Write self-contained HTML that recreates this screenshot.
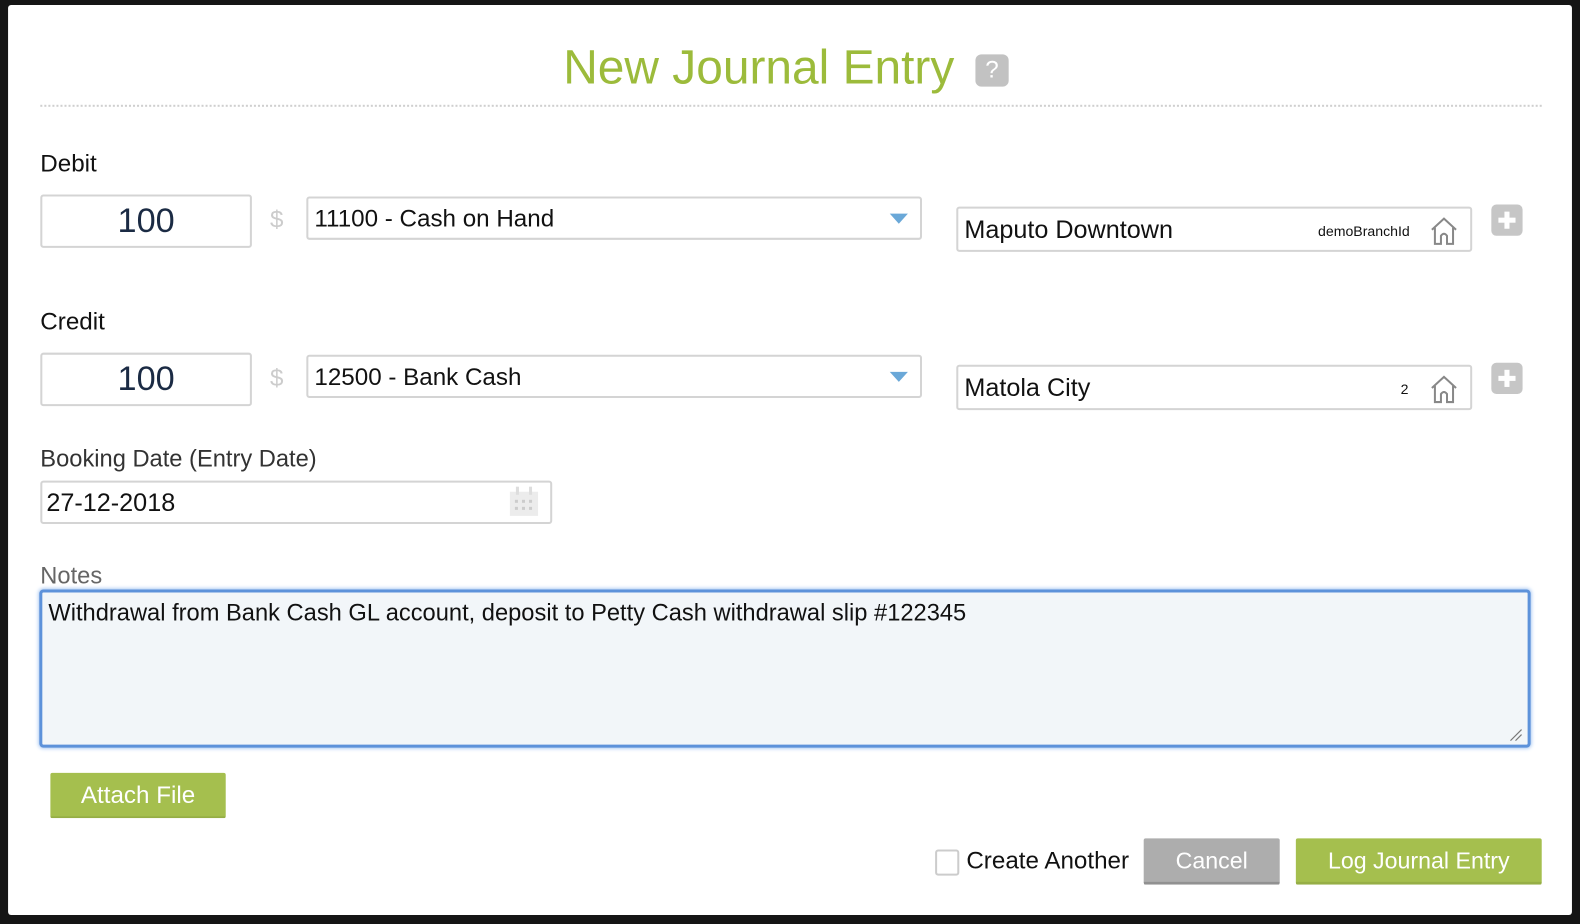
<!DOCTYPE html>
<html><head><meta charset="utf-8"><style>
*{box-sizing:border-box;margin:0;padding:0}
body{width:1580px;height:924px;background:#151515;font-family:"Liberation Sans",sans-serif;position:relative;overflow:hidden}
#z{position:absolute;left:0;top:0;width:1568px;height:917px;transform:scale(1.00766);transform-origin:0 0}
.w{position:absolute;left:8px;top:5px;width:1552px;height:903px;background:#fff;border-radius:3px}
.a{position:absolute}
.box{position:absolute;border:2px solid #d4d4d4;border-radius:3px;background:#fff}
.lbl{position:absolute;font-size:24px;color:#111;line-height:1;white-space:nowrap}
.t{position:absolute;font-size:24px;color:#111;line-height:1;white-space:nowrap}
.amt{font-size:34px;color:#1b2b44;text-align:center;line-height:48px}
.arrow{position:absolute;width:0;height:0;border-left:9px solid transparent;border-right:9px solid transparent;border-top:10px solid #6aa8d8}
.plus{position:absolute;width:31px;height:31px;background:#c6c6c6;border-radius:5px}
.plus:before{content:"";position:absolute;left:7px;top:13px;width:17px;height:5px;background:#fff}
.plus:after{content:"";position:absolute;left:13px;top:7px;width:5px;height:17px;background:#fff}
.btn{position:absolute;color:#fff;font-size:23px;text-align:center;border-radius:2px;white-space:nowrap}
</style></head><body><div id="z">
<div class="w"></div>
<div class="t" style="left:0;width:1506px;text-align:center;top:44px;font-size:47.5px;color:#9cbb3b">New Journal Entry</div>
<div class="a" style="left:968px;top:54px;width:33px;height:32px;background:#c2c2c2;border-radius:6px;color:#fff;font-size:24px;text-align:center;line-height:32px">?</div>
<div class="a" style="left:40px;top:104px;width:1490px;border-top:2px dotted #cfcfcf"></div>

<div class="lbl" style="left:40px;top:151px">Debit</div>
<div class="box amt" style="left:40px;top:193px;width:210px;height:53px">100</div>
<div class="t" style="left:268px;top:207px;color:#ccc;font-size:24px">$</div>
<div class="box" style="left:304px;top:195px;width:611px;height:43px"></div>
<div class="t" style="left:312px;top:206px">11100 - Cash on Hand</div>
<div class="arrow" style="left:883px;top:212px"></div>
<div class="box" style="left:949px;top:205px;width:512px;height:45px"></div>
<div class="t" style="left:957px;top:216px;font-size:25px">Maputo Downtown</div>
<div class="t" style="left:1308px;top:222px;font-size:14px">demoBranchId</div>
<svg class="a" style="left:1418px;top:214px" width="30" height="30" viewBox="0 0 30 30"><path d="M3 14 L15 3 L27 14 M6 12 V28 H12 V20 Q15 16 18 20 V28 H24 V12" fill="none" stroke="#888" stroke-width="2"/></svg>
<div class="plus" style="left:1480px;top:203px"></div>

<div class="lbl" style="left:40px;top:308px">Credit</div>
<div class="box amt" style="left:40px;top:350px;width:210px;height:53px">100</div>
<div class="t" style="left:268px;top:364px;color:#ccc;font-size:24px">$</div>
<div class="box" style="left:304px;top:352px;width:611px;height:43px"></div>
<div class="t" style="left:312px;top:363px">12500 - Bank Cash</div>
<div class="arrow" style="left:883px;top:369px"></div>
<div class="box" style="left:949px;top:362px;width:512px;height:45px"></div>
<div class="t" style="left:957px;top:373px;font-size:25px">Matola City</div>
<div class="t" style="left:1390px;top:379px;font-size:14px">2</div>
<svg class="a" style="left:1418px;top:371px" width="30" height="30" viewBox="0 0 30 30"><path d="M3 14 L15 3 L27 14 M6 12 V28 H12 V20 Q15 16 18 20 V28 H24 V12" fill="none" stroke="#888" stroke-width="2"/></svg>
<div class="plus" style="left:1480px;top:360px"></div>

<div class="lbl" style="left:40px;top:444px;color:#333;font-size:23.5px">Booking Date (Entry Date)</div>
<div class="box" style="left:40px;top:477px;width:508px;height:43px"></div>
<div class="t" style="left:46px;top:487px;font-size:25px">27-12-2018</div>
<svg class="a" style="left:504px;top:482px" width="32" height="32" viewBox="0 0 32 32"><rect x="2" y="6" width="28" height="24" fill="#ececec"/><rect x="8" y="1" width="3" height="8" fill="#ddd"/><rect x="21" y="1" width="3" height="8" fill="#ddd"/><g fill="#ccc"><rect x="7" y="14" width="3" height="3"/><rect x="14" y="14" width="3" height="3"/><rect x="21" y="14" width="3" height="3"/><rect x="7" y="21" width="3" height="3"/><rect x="14" y="21" width="3" height="3"/><rect x="21" y="21" width="3" height="3"/></g></svg>

<div class="lbl" style="left:40px;top:560px;color:#666;font-size:23.5px">Notes</div>
<div class="a" style="left:39px;top:585px;width:1480px;height:157px;background:#f2f6f9;border:3px solid #5d92da;border-radius:4px;box-shadow:0 0 4px #8fb8ee"></div>
<div class="t" style="left:48px;top:597px;font-size:23.5px">Withdrawal from Bank Cash GL account, deposit to Petty Cash withdrawal slip #122345</div>
<svg class="a" style="left:1497px;top:722px" width="14" height="14"><path d="M2 13 L13 2 M7 13 L13 7" stroke="#777" stroke-width="1.2"/></svg>

<div class="btn" style="left:50px;top:767px;width:174px;height:45px;line-height:45px;background:#a5bf4e;border-bottom:2px solid #95ad45;font-size:24px">Attach File</div>

<div class="a" style="left:928px;top:843px;width:24px;height:26px;border:2px solid #ccc;border-radius:3px"></div>
<div class="t" style="left:959px;top:843px;font-size:24px">Create Another</div>
<div class="btn" style="left:1135px;top:832px;width:135px;height:46px;line-height:44px;background:#adadad;border-bottom:3px solid #919191">Cancel</div>
<div class="btn" style="left:1286px;top:832px;width:244px;height:46px;line-height:44px;background:#a5bf4e;border-bottom:3px solid #96ae46">Log Journal Entry</div>
</div></body></html>
